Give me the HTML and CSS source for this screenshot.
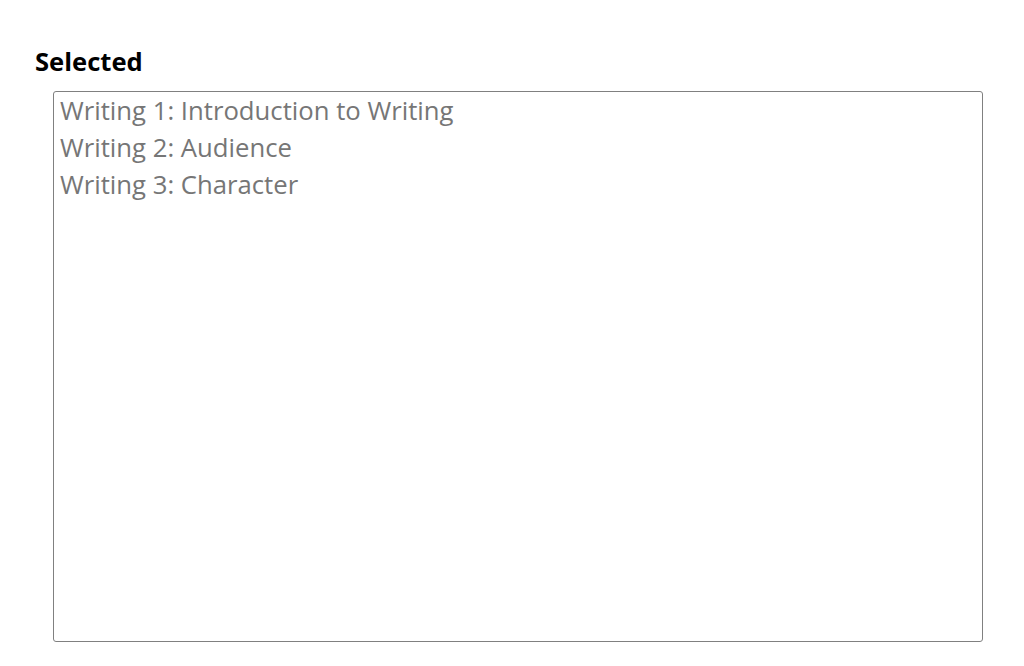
FILE: index.html
```html
<!DOCTYPE html>
<html lang="en">
<head>
  <meta charset="UTF-8" />
  <meta name="viewport" content="width=device-width, initial-scale=1.0"/>
  <title>Selected</title>
  <link rel="stylesheet" href="styles.css">
</head>
<body>
  <div class="container">
    <label class="field-label" for="selected">Selected</label>
    <div class="listbox" id="selected" role="listbox">
      <div class="option" role="option">Writing 1: Introduction to Writing</div>
      <div class="option" role="option">Writing 2: Audience</div>
      <div class="option" role="option">Writing 3: Character</div>
    </div>
  </div>
</body>
</html>
```

FILE: styles.css
```css
* {
  box-sizing: border-box;
}

body {
  margin: 0;
  font-family: 'Open Sans', 'Noto Sans', sans-serif;
  background: #fff;
  color: #000;
}

.container {
  padding: 47px 0 0 35px;
}

.field-label {
  display: block;
  font-size: 25.6px;
  font-weight: 700;
  line-height: 30px;
  margin-bottom: 14px;
}

.listbox {
  margin-left: 18px;
  width: 930px;
  height: 551px;
  border: 1.5px solid #808080;
  border-radius: 3px;
  padding: 0 6px;
}

.option {
  font-size: 25.7px;
  line-height: 37px;
  color: #767676;
}
```
